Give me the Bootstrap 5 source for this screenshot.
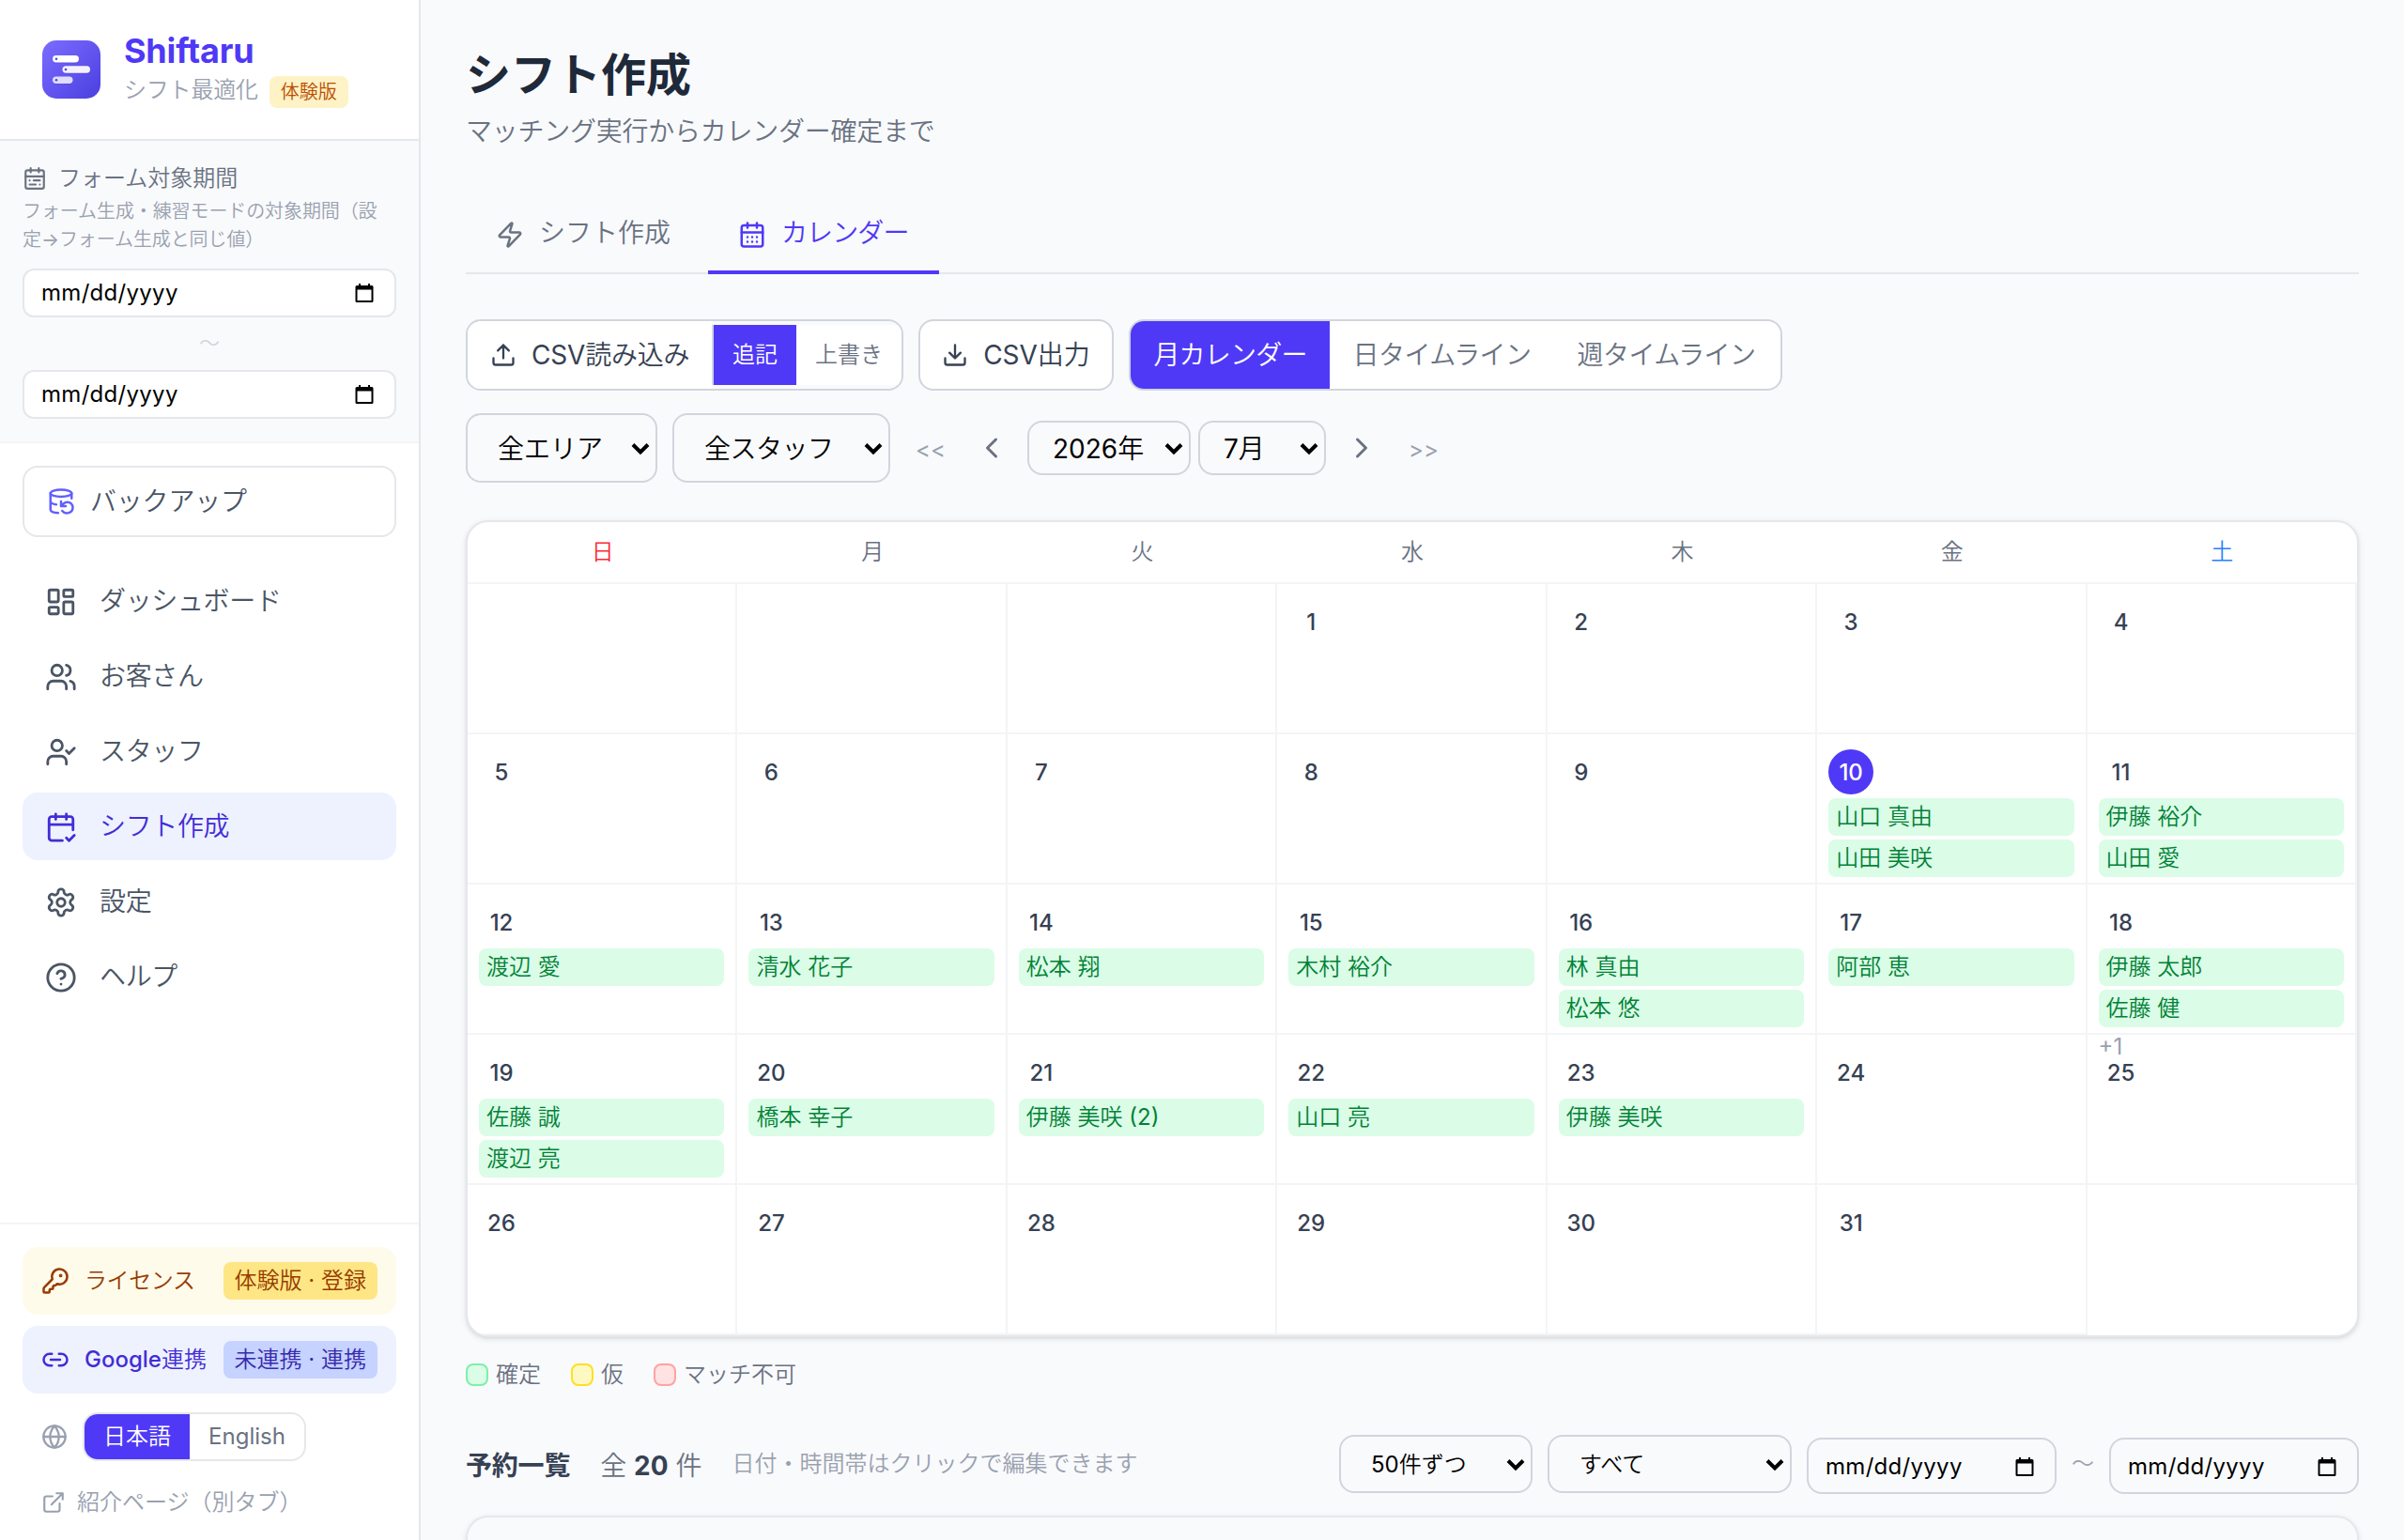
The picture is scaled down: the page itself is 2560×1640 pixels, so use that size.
<!DOCTYPE html>
<html lang="ja">
<head>
<meta charset="utf-8">
<meta name="viewport" content="width=device-width, initial-scale=1">
<title>Shiftaru - シフト作成</title>
<link href="https://cdn.jsdelivr.net/npm/bootstrap@5.3.0/dist/css/bootstrap.min.css" rel="stylesheet">
<style>
:root{--page:#f9fafc;--indigo:#4f39f6;--line:#e5e7eb;--line-soft:#f3f4f6;--line-strong:#d1d5dc}
body{font-family:Inter,"Noto Sans CJK JP DemiLight","Noto Sans CJK JP",sans-serif;font-size:24px;line-height:32px;background:var(--page);color:#364153;height:1640px;overflow:hidden}
svg{display:block;flex:none}
.ico{fill:none;stroke:currentColor;stroke-width:2;stroke-linecap:round;stroke-linejoin:round}
.jp-bold{font-family:Inter,"Noto Sans CJK JP",sans-serif;font-weight:700}
.t28{font-size:28px}
.c-muted{color:#6a7282}.c-faint{color:#99a1af}

/* sidebar */
.side{width:448px;height:1640px;background:#fff;border-right:2px solid var(--line)}
.brand{height:150px;border-bottom:2px solid var(--line);padding:0 45px}
.brand-text{margin-left:25px}
.brand-title{font-size:36px;line-height:42px;letter-spacing:-.2px;color:var(--indigo);font-weight:700;padding-bottom:2px}
.brand-sub{letter-spacing:-.2px}
.trial{background:#fef3c6;color:#bb4d00;font-size:20px;line-height:34px;height:34px;padding:0 12px;border-radius:8px;letter-spacing:0}
.period{height:322px;background:var(--page);border-bottom:2px solid var(--line-soft);padding:20px 24px 0}
.period-note{font-size:20px;line-height:30px;letter-spacing:-.1px;padding-right:12px}
.datebox{height:52px;border:2px solid var(--line);border-radius:12px;background:#fff;padding:0 22px 1px 18px;color:#000;letter-spacing:.3px}
.tilde{height:56px;color:#d1d5dc;font-size:22px;padding-bottom:3px}
.backup{height:76px;border:2px solid var(--line);border-radius:16px;padding:0 24px;color:#4a5565;letter-spacing:-.2px}
.menu .nav-link{height:72px;border-radius:16px;padding:0 24px;gap:24px;color:#4a5565;font-size:28px;line-height:40px;letter-spacing:-.35px}
.menu .nav-link.active{background:#eef2ff;color:#432dd7}
.menu .ico{transform:translateY(1px)}
.side-foot{height:338px;border-top:2px solid var(--line-soft);padding:24px 24px 0}
.status{height:72px;border-radius:16px;padding:0 20px}
.status-license{background:#fffbeb;color:#973c00}
.status-google{background:#eef2ff;color:#432dd7;margin-top:12px}
.status-tag{height:40px;line-height:40px;border-radius:8px;padding:0 12px;white-space:nowrap}
.lang{height:52px;width:238px;border:2px solid var(--line);border-radius:16px;overflow:hidden}
.lang .on{width:112px;background:var(--indigo);color:#fff}

/* main */
.main{padding:0 48px}
.page-title{font-size:48px;line-height:60px;color:#1e2939;margin:50px 0 0}
.page-sub{line-height:40px;margin-top:10px;letter-spacing:-.25px}
.tabs{height:84px;border-bottom:2px solid var(--line);margin-top:48px}
.tabs .nav-link{height:84px;padding:0 32px;gap:16px;font-size:28px;line-height:40px;border-radius:0;color:#6a7282}
.tabs .nav-link span{position:relative;top:-2px}
.tabs .nav-link.active{width:246px;border-bottom:4px solid var(--indigo);color:var(--indigo);letter-spacing:-.9px;padding-top:4px}
.box{border:2px solid var(--line-strong);border-radius:16px;height:76px}
.box-white{background:#fff;color:#364153}
.import-main{width:260px;background:#fff;padding-left:24px;gap:16px;letter-spacing:-.2px}
.mode{height:64px;font-size:24px}
.mode-on{width:90px;border-left:2px solid var(--line-strong);background:var(--indigo);background-clip:padding-box;color:#fff}
.view{font-size:28px}
.view-on{width:212px;background:var(--indigo);color:#fff;letter-spacing:-.8px}
.view-off{width:239px;letter-spacing:-.6px}
.pick{border:2px solid var(--line-strong);border-radius:16px;color:#000;font-size:28px;padding:2px 6px 0 32px}

.cal{border:2px solid var(--line);border-radius:24px;background:#fff;height:870px;margin-top:40px;box-shadow:0 2px 6px rgba(0,0,0,.1),0 2px 4px -2px rgba(0,0,0,.1);overflow:hidden}
.cal-head{display:grid;grid-template-columns:repeat(7,1fr);height:66px;border-bottom:2px solid var(--line-soft);text-align:center;line-height:63px}
.cal-grid{display:grid;grid-template-columns:repeat(7,1fr);grid-auto-rows:160px}
.day{border-right:2px solid var(--line-soft);border-bottom:2px solid var(--line-soft);padding:16px 12px 0;height:160px;min-width:0}
.day:last-child{border:0}
.num{display:block;width:48px;height:48px;line-height:49px;text-align:center;font-weight:500;margin-bottom:4px;border-radius:50%}
.num.today{background:var(--indigo);color:#fff}
.shift{height:40px;line-height:39px;border-radius:8px;background:#dbfce7;color:#008236;padding:0 8px;margin-bottom:4px;white-space:nowrap}
.more{line-height:34px;color:#99a1af}
.sw{width:24px;height:24px;border:2px solid;border-radius:8px}
.sw-g{background:#dbfce7;border-color:#7bf1a8}.sw-y{background:#fef9c2;border-color:#ffdf20}.sw-r{background:#ffe2e2;border-color:#ffa2a2}
.filter{border:2px solid var(--line-strong);border-radius:16px;color:#000;height:62px;padding:1px 6px 0 32px}
.filter-date{width:266px;height:60px;padding:2px 22px 0 18px;letter-spacing:.3px}
.listcard{height:80px;border:2px solid var(--line);border-radius:24px;box-shadow:0 2px 6px rgba(0,0,0,.1);margin-top:24px}
</style>
<script src="https://cdn.jsdelivr.net/npm/bootstrap@5.3.0/dist/js/bootstrap.bundle.min.js"></script>
</head>
<body>
<svg width="0" height="0" class="d-none">
  <symbol id="i-date" viewBox="0 0 20 20"><path d="M4 0h2v2h8V0h2v2h2a1.500 1.500 0 0 1 1.500 1.500v15A1.500 1.500 0 0 1 18 20H2A1.500 1.500 0 0 1 .5 18.500v-15A1.500 1.500 0 0 1 2 2h2zM2.500 6.500V18h15V6.500z" fill="#000" fill-rule="evenodd"/></symbol>
  <symbol id="i-chev" viewBox="0 0 20 14"><path d="M2 2.500l8 8 8-8" fill="none" stroke="#000" stroke-width="4"/></symbol>
</svg>
<div class="d-flex">
<aside class="side d-flex flex-column flex-shrink-0">
  <div class="brand d-flex align-items-center">
    <svg width="62" height="62" viewBox="0 0 62 62">
      <defs><linearGradient id="lg" x1="0" y1="0" x2="1" y2="1"><stop offset="0" stop-color="#7c6cff"/><stop offset="1" stop-color="#4a3fe0"/></linearGradient></defs>
      <rect width="62" height="62" rx="15" fill="url(#lg)"/>
      <rect x="11" y="17" width="28" height="7.500" rx="3.700" fill="#4a3fd0" opacity=".35"/><rect x="21.500" y="28" width="29.500" height="7.500" rx="3.700" fill="#4a3fd0" opacity=".35"/><rect x="11" y="39.500" width="21.500" height="7.500" rx="3.700" fill="#4a3fd0" opacity=".35"/>
      <rect x="11" y="16" width="28" height="7.500" rx="3.700" fill="#fff"/><rect x="21.500" y="27.200" width="29.500" height="7.500" rx="3.700" fill="#f3f1ff"/><rect x="11" y="38.500" width="21.500" height="7.500" rx="3.700" fill="#e0dcfb"/>
      <g fill="#4f46e5"><circle cx="15" cy="19.800" r="1.300"/><circle cx="25" cy="31" r="1.300"/><circle cx="15" cy="42.200" r="1.300"/></g>
    </svg>
    <div class="brand-text">
      <div class="brand-title">Shiftaru</div>
      <div class="brand-sub d-flex align-items-center gap-2"><span class="c-faint me-1">シフト最適化</span><span class="trial mt-1">体験版</span></div>
    </div>
  </div>

  <div class="period">
    <div class="d-flex align-items-center c-muted mt-1">
      <svg class="ico" width="26" height="26" viewBox="0 0 24 24"><rect x="3" y="4" width="18" height="18" rx="2"/><path d="M16 2v4M3 10h18M8 2v4M17 14h-6M13 18H7M7 14h.01M17 18h.01"/></svg>
      <span class="ms-2 ps-1">フォーム対象期間</span>
    </div>
    <div class="period-note c-faint mt-1">フォーム生成・練習モードの対象期間（設定→フォーム生成と同じ値）</div>
    <div class="datebox d-flex align-items-center justify-content-between mt-3">mm/dd/yyyy<svg width="20" height="20"><use href="#i-date"/></svg></div>
    <div class="tilde d-flex align-items-center justify-content-center">〜</div>
    <div class="datebox d-flex align-items-center justify-content-between">mm/dd/yyyy<svg width="20" height="20"><use href="#i-date"/></svg></div>
  </div>

  <div class="px-4 pt-4 flex-grow-1">
    <div class="backup d-flex align-items-center t28">
      <svg class="ico" width="30" height="30" viewBox="0 0 24 24" color="#615fff"><ellipse cx="12" cy="5" rx="9" ry="3"/><path d="M3 12a9 3 0 0 0 5 2.690M21 9.300V5M3 5v14a9 3 0 0 0 6.470 2.880M12 12v4h4M13 20a5 5 0 0 0 9-3 4.500 4.500 0 0 0-4.500-4.500c-1.330 0-2.540.540-3.410 1.410L12 16"/></svg>
      <span class="ms-3">バックアップ</span>
    </div>
    <nav class="menu nav flex-column gap-2 mt-4 pt-2">
      <a class="nav-link d-flex align-items-center"><svg class="ico" width="34" height="34" viewBox="0 0 24 24"><rect x="3" y="3" width="7" height="9" rx="1"/><rect x="14" y="3" width="7" height="5" rx="1"/><rect x="14" y="12" width="7" height="9" rx="1"/><rect x="3" y="16" width="7" height="5" rx="1"/></svg>ダッシュボード</a>
      <a class="nav-link d-flex align-items-center"><svg class="ico" width="34" height="34" viewBox="0 0 24 24"><path d="M16 21v-2a4 4 0 0 0-4-4H6a4 4 0 0 0-4 4v2"/><circle cx="9" cy="7" r="4"/><path d="M22 21v-2a4 4 0 0 0-3-3.870M16 3.130a4 4 0 0 1 0 7.750"/></svg>お客さん</a>
      <a class="nav-link d-flex align-items-center"><svg class="ico" width="34" height="34" viewBox="0 0 24 24"><path d="M16 21v-2a4 4 0 0 0-4-4H6a4 4 0 0 0-4 4v2"/><circle cx="9" cy="7" r="4"/><path d="m16 11 2 2 4-4"/></svg>スタッフ</a>
      <a class="nav-link active d-flex align-items-center"><svg class="ico" width="34" height="34" viewBox="0 0 24 24"><path d="M8 2v4M16 2v4M21 14V6a2 2 0 0 0-2-2H5a2 2 0 0 0-2 2v14a2 2 0 0 0 2 2h8M3 10h18M16 20l2 2 4-4"/></svg>シフト作成</a>
      <a class="nav-link d-flex align-items-center"><svg class="ico" width="34" height="34" viewBox="0 0 24 24"><path d="M12.220 2h-.440a2 2 0 0 0-2 2v.180a2 2 0 0 1-1 1.730l-.430.250a2 2 0 0 1-2 0l-.150-.080a2 2 0 0 0-2.730.730l-.220.380a2 2 0 0 0 .730 2.730l.150.100a2 2 0 0 1 1 1.720v.510a2 2 0 0 1-1 1.740l-.150.090a2 2 0 0 0-.730 2.730l.220.380a2 2 0 0 0 2.730.730l.150-.080a2 2 0 0 1 2 0l.430.250a2 2 0 0 1 1 1.730V20a2 2 0 0 0 2 2h.440a2 2 0 0 0 2-2v-.180a2 2 0 0 1 1-1.730l.430-.250a2 2 0 0 1 2 0l.150.080a2 2 0 0 0 2.730-.730l.220-.390a2 2 0 0 0-.730-2.730l-.150-.080a2 2 0 0 1-1-1.740v-.500a2 2 0 0 1 1-1.740l.150-.090a2 2 0 0 0 .730-2.730l-.220-.380a2 2 0 0 0-2.730-.730l-.150.080a2 2 0 0 1-2 0l-.430-.250a2 2 0 0 1-1-1.730V4a2 2 0 0 0-2-2z"/><circle cx="12" cy="12" r="3"/></svg>設定</a>
      <a class="nav-link d-flex align-items-center"><svg class="ico" width="34" height="34" viewBox="0 0 24 24"><circle cx="12" cy="12" r="10"/><path d="M9.090 9a3 3 0 0 1 5.830 1c0 2-3 3-3 3M12 17h.01"/></svg>ヘルプ</a>
    </nav>
  </div>

  <div class="side-foot">
    <div class="status status-license d-flex align-items-center">
      <svg class="ico" width="30" height="30" viewBox="0 0 24 24"><path d="M2.586 17.414A2 2 0 0 0 2 18.828V21a1 1 0 0 0 1 1h3a1 1 0 0 0 1-1v-1a1 1 0 0 1 1-1h1a1 1 0 0 0 1-1v-1a1 1 0 0 1 1-1h.172a2 2 0 0 0 1.414-.586l.814-.814a6.500 6.500 0 1 0-4-4z"/><circle cx="16.500" cy="7.500" r=".5" fill="currentColor"/></svg>
      <span class="ms-3" style="letter-spacing:-.4px">ライセンス</span><span class="status-tag ms-auto" style="background:#fee685">体験版 · 登録</span>
    </div>
    <div class="status status-google d-flex align-items-center">
      <svg class="ico" width="30" height="30" viewBox="0 0 24 24"><path d="M9 17H7A5 5 0 0 1 7 7h2M15 7h2a5 5 0 1 1 0 10h-2M8 12h8"/></svg>
      <span class="ms-3 text-nowrap" style="font-weight:500">Google連携</span><span class="status-tag ms-auto" style="background:#c6d2ff;color:#372aac">未連携 · 連携</span>
    </div>
    <div class="d-flex align-items-center" style="margin-top:20px;padding-left:20px">
      <svg class="ico c-faint" width="28" height="28" viewBox="0 0 24 24"><circle cx="12" cy="12" r="10"/><path d="M12 2a14.500 14.500 0 0 0 0 20 14.500 14.500 0 0 0 0-20M2 12h20"/></svg>
      <div class="lang d-flex ms-3"><span class="on d-flex align-items-center justify-content-center">日本語</span><span class="flex-fill d-flex align-items-center justify-content-center c-muted">English</span></div>
    </div>
    <div class="d-flex align-items-center c-faint" style="margin-top:28px;padding-left:20px">
      <svg class="ico" width="26" height="26" viewBox="0 0 24 24"><path d="M15 3h6v6M10 14 21 3M18 13v6a2 2 0 0 1-2 2H5a2 2 0 0 1-2-2V8a2 2 0 0 1 2-2h6"/></svg>
      <span style="margin-left:12px">紹介ページ（別タブ）</span>
    </div>
  </div>
</aside>

<main class="main flex-grow-1">
  <h1 class="page-title jp-bold">シフト作成</h1>
  <p class="page-sub t28 c-muted mb-0">マッチング実行からカレンダー確定まで</p>
  <ul class="tabs nav gap-2 flex-nowrap">
    <li class="nav-item"><a class="nav-link d-flex align-items-center"><svg class="ico" width="30" height="30" viewBox="0 0 24 24"><path d="M4 14a1 1 0 0 1-.780-1.630l9.900-10.200a.5.5 0 0 1 .860.460l-1.920 6.020A1 1 0 0 0 13 10h7a1 1 0 0 1 .780 1.630l-9.900 10.200a.5.5 0 0 1-.860-.460l1.920-6.020A1 1 0 0 0 11 14z"/></svg><span>シフト作成</span></a></li>
    <li class="nav-item"><a class="nav-link active d-flex align-items-center"><svg class="ico" width="30" height="30" viewBox="0 0 24 24"><rect x="3" y="4" width="18" height="18" rx="2"/><path d="M8 2v4M16 2v4M3 10h18M8 14h.01M12 14h.01M16 14h.01M8 18h.01M12 18h.01M16 18h.01"/></svg><span>カレンダー</span></a></li>
  </ul>

  <div class="d-flex gap-3" style="margin-top:48px">
    <div class="box d-flex align-items-center overflow-hidden" style="width:466px">
      <div class="import-main d-flex align-items-center t28 h-100"><svg class="ico" width="28" height="28" viewBox="0 0 24 24"><path d="M21 15v4a2 2 0 0 1-2 2H5a2 2 0 0 1-2-2v-4M17 8l-5-5-5 5M12 3v12"/></svg>CSV読み込み</div>
      <div class="mode mode-on d-flex align-items-center justify-content-center">追記</div>
      <div class="mode flex-fill d-flex align-items-center justify-content-center bg-white c-muted">上書き</div>
    </div>
    <div class="box box-white d-flex align-items-center justify-content-center t28 gap-3" style="width:208px"><svg class="ico" width="28" height="28" viewBox="0 0 24 24"><path d="M21 15v4a2 2 0 0 1-2 2H5a2 2 0 0 1-2-2v-4M7 10l5 5 5-5M12 15V3"/></svg>CSV出力</div>
    <div class="box box-white d-flex overflow-hidden view" style="width:696px">
      <div class="view-on d-flex align-items-center justify-content-center">月カレンダー</div>
      <div class="view-off d-flex align-items-center justify-content-center c-muted">日タイムライン</div>
      <div class="view-off d-flex align-items-center justify-content-center c-muted">週タイムライン</div>
    </div>
  </div>

  <div class="d-flex align-items-center" style="margin-top:24px;height:74px">
    <div class="pick d-flex align-items-center justify-content-between h-100" style="width:204px">全エリア<svg width="20" height="14"><use href="#i-chev"/></svg></div>
    <div class="pick d-flex align-items-center justify-content-between h-100 ms-3" style="width:232px;letter-spacing:-.5px">全スタッフ<svg width="20" height="14"><use href="#i-chev"/></svg></div>
    <div class="c-faint text-center pt-1" style="width:86px">&lt;&lt;</div>
    <div class="d-flex justify-content-center" style="width:44px"><svg class="ico c-muted" width="36" height="36" viewBox="0 0 24 24"><path d="M15 18l-6-6 6-6"/></svg></div>
    <div class="pick d-flex align-items-center justify-content-between" style="width:174px;height:58px;padding-left:25px;margin-left:16px">2026年<svg width="20" height="14"><use href="#i-chev"/></svg></div>
    <div class="pick d-flex align-items-center justify-content-between ms-2" style="width:136px;height:58px;padding-left:25px">7月<svg width="20" height="14"><use href="#i-chev"/></svg></div>
    <div class="d-flex justify-content-center" style="width:44px;margin-left:16px"><svg class="ico c-muted" width="36" height="36" viewBox="0 0 24 24"><path d="M9 18l6-6-6-6"/></svg></div>
    <div class="c-faint text-center pt-1" style="width:88px">&gt;&gt;</div>
  </div>

  <section class="cal">
    <div class="cal-head c-muted"><div style="color:#fb2c36">日</div><div>月</div><div>火</div><div>水</div><div>木</div><div>金</div><div style="color:#2b7fff">土</div></div>
    <div class="cal-grid">
      <div class="day"></div><div class="day"></div><div class="day"></div>
      <div class="day"><span class="num">1</span></div>
      <div class="day"><span class="num">2</span></div>
      <div class="day"><span class="num">3</span></div>
      <div class="day"><span class="num">4</span></div>

      <div class="day"><span class="num">5</span></div>
      <div class="day"><span class="num">6</span></div>
      <div class="day"><span class="num">7</span></div>
      <div class="day"><span class="num">8</span></div>
      <div class="day"><span class="num">9</span></div>
      <div class="day"><span class="num today">10</span><div class="shift">山口 真由</div><div class="shift">山田 美咲</div></div>
      <div class="day"><span class="num">11</span><div class="shift">伊藤 裕介</div><div class="shift">山田 愛</div></div>

      <div class="day"><span class="num">12</span><div class="shift">渡辺 愛</div></div>
      <div class="day"><span class="num">13</span><div class="shift">清水 花子</div></div>
      <div class="day"><span class="num">14</span><div class="shift">松本 翔</div></div>
      <div class="day"><span class="num">15</span><div class="shift">木村 裕介</div></div>
      <div class="day"><span class="num">16</span><div class="shift">林 真由</div><div class="shift">松本 悠</div></div>
      <div class="day"><span class="num">17</span><div class="shift">阿部 恵</div></div>
      <div class="day"><span class="num">18</span><div class="shift">伊藤 太郎</div><div class="shift">佐藤 健</div><div class="more">+1</div></div>

      <div class="day"><span class="num">19</span><div class="shift">佐藤 誠</div><div class="shift">渡辺 亮</div></div>
      <div class="day"><span class="num">20</span><div class="shift">橋本 幸子</div></div>
      <div class="day"><span class="num">21</span><div class="shift">伊藤 美咲 (2)</div></div>
      <div class="day"><span class="num">22</span><div class="shift">山口 亮</div></div>
      <div class="day"><span class="num">23</span><div class="shift">伊藤 美咲</div></div>
      <div class="day"><span class="num">24</span></div>
      <div class="day"><span class="num">25</span></div>

      <div class="day"><span class="num">26</span></div>
      <div class="day"><span class="num">27</span></div>
      <div class="day"><span class="num">28</span></div>
      <div class="day"><span class="num">29</span></div>
      <div class="day"><span class="num">30</span></div>
      <div class="day"><span class="num">31</span></div>
      <div class="day"></div>
    </div>
  </section>

  <div class="d-flex align-items-center c-muted" style="margin-top:24px;gap:32px">
    <span class="d-flex align-items-center gap-2"><i class="sw sw-g"></i>確定</span>
    <span class="d-flex align-items-center gap-2"><i class="sw sw-y"></i>仮</span>
    <span class="d-flex align-items-center gap-2"><i class="sw sw-r"></i><span>マッチ不可</span></span>
  </div>

  <div class="d-flex align-items-center" style="margin-top:48px;height:62px">
    <span class="jp-bold t28 text-nowrap pt-1" style="letter-spacing:-.2px">予約一覧</span>
    <span class="t28 c-muted text-nowrap pt-1" style="margin-left:32px">全 <span class="jp-bold" style="color:#364153">20</span> 件</span>
    <span class="c-faint text-nowrap" style="margin-left:32px">日付・時間帯はクリックで編集できます</span>
    <div class="d-flex align-items-center gap-3 ms-auto">
      <div class="filter d-flex align-items-center justify-content-between" style="width:206px">50件ずつ<svg width="20" height="14"><use href="#i-chev"/></svg></div>
      <div class="filter d-flex align-items-center justify-content-between" style="width:260px">すべて<svg width="20" height="14"><use href="#i-chev"/></svg></div>
      <div class="filter filter-date d-flex align-items-center justify-content-between mt-1">mm/dd/yyyy<svg width="20" height="20"><use href="#i-date"/></svg></div>
      <span class="c-faint">〜</span>
      <div class="filter filter-date d-flex align-items-center justify-content-between mt-1">mm/dd/yyyy<svg width="20" height="20"><use href="#i-date"/></svg></div>
    </div>
  </div>
  <div class="listcard"></div>
</main>
</div>
</body>
</html>
